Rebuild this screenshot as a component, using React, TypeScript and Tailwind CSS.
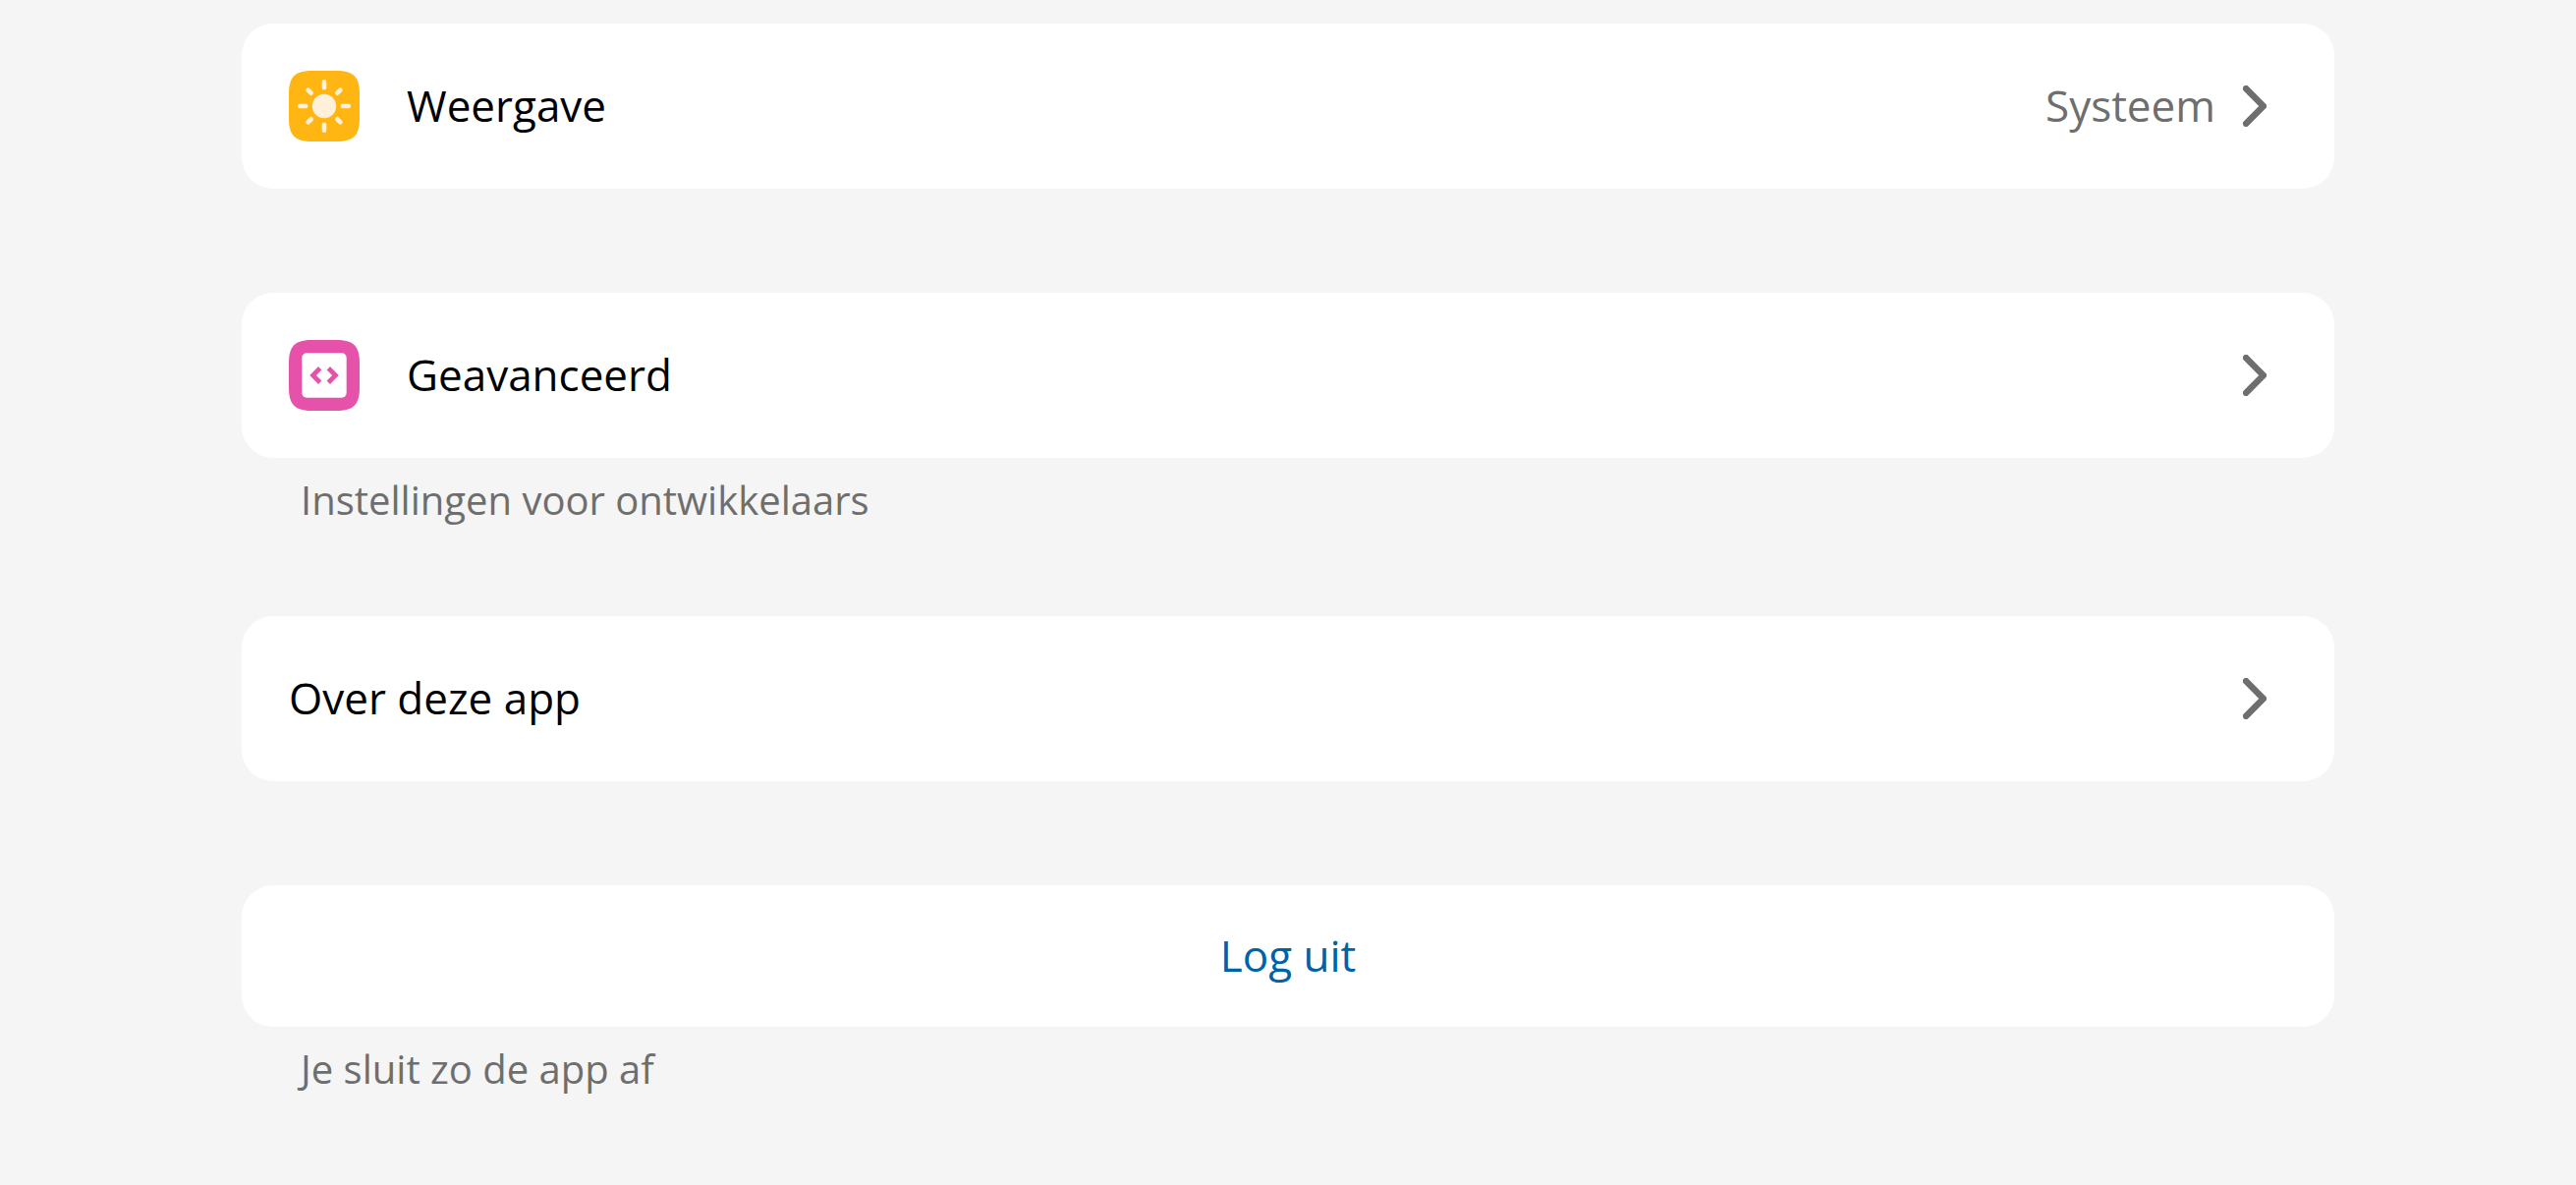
import type { ReactNode } from "react";

function Chevron() {
  return (
    <svg viewBox="0 0 24 42" className="h-[42px] w-6 shrink-0" fill="none" aria-hidden="true">
      <path d="M3.2 3.2 20.8 21 3.2 38.8" stroke="#6e6e6e" strokeWidth="6.6" strokeLinecap="round" strokeLinejoin="round" />
    </svg>
  );
}

const squircle =
  "M0 24C0 6 6 0 24 0H48C66 0 72 6 72 24V48C72 66 66 72 48 72H24C6 72 0 66 0 48Z";

function SunIcon() {
  return (
    <svg viewBox="0 0 72 72" className="mr-12 size-[72px] shrink-0" aria-hidden="true">
      <path d={squircle} fill="#ffb612" />
      <circle cx="36" cy="36" r="12.2" fill="#fff0d9" />
      <path
        d="M36 11.2V17.2M36 54.8V60.8M11.2 36H17.2M54.8 36H60.8M19.6 19.6 22.7 22.7M49.3 49.3 52.4 52.4M19.6 52.4 22.7 49.3M49.3 22.7 52.4 19.6"
        stroke="#fff0d9"
        strokeWidth="4.6"
        strokeLinecap="round"
      />
    </svg>
  );
}

function CodeIcon() {
  return (
    <svg viewBox="0 0 72 72" className="mr-12 size-[72px] shrink-0" aria-hidden="true">
      <path d={squircle} fill="#e651aa" />
      <rect x="13.3" y="13.3" width="45.4" height="45.4" rx="4.8" fill="#fff" />
      <path
        d="M30 27 33.4 30.4 27.9 36 33.4 41.6 30 45 21.2 36ZM42 27 38.6 30.4 44.1 36 38.6 41.6 42 45 50.8 36Z"
        fill="#e651aa"
      />
    </svg>
  );
}

function Row({ icon, label, value }: { icon?: ReactNode; label: string; value?: string }) {
  return (
    <button
      type="button"
      className="flex min-h-[168px] w-full items-center rounded-[32px] bg-white pr-[69px] pl-12 text-left text-[44px] leading-[60px] text-black"
    >
      {icon}
      <span className="grow pb-0.5">{label}</span>
      {value && <span className="mr-7 pb-0.5 text-[#6e6e6e]">{value}</span>}
      <Chevron />
    </button>
  );
}

function Note({ children }: { children: ReactNode }) {
  return <p className="px-[60px] pt-3 text-[40px] leading-[62px] text-[#6e6e6e]">{children}</p>;
}

export default function App() {
  return (
    <main className="min-h-screen bg-neutral-100 px-[246px] pt-6 pb-20 font-['Open_Sans',sans-serif]">
      <section className="mb-[106px]">
        <Row icon={<SunIcon />} label="Weergave" value="Systeem" />
      </section>
      <section className="mb-[87px]">
        <Row icon={<CodeIcon />} label="Geavanceerd" />
        <Note>Instellingen voor ontwikkelaars</Note>
      </section>
      <section className="mb-[106px]">
        <Row label="Over deze app" />
      </section>
      <section>
        <button
          type="button"
          className="min-h-36 w-full rounded-[32px] bg-white pb-0.5 text-center text-[44px] leading-[60px] text-[#0062a7]"
        >
          Log uit
        </button>
        <Note>Je sluit zo de app af</Note>
      </section>
    </main>
  );
}
